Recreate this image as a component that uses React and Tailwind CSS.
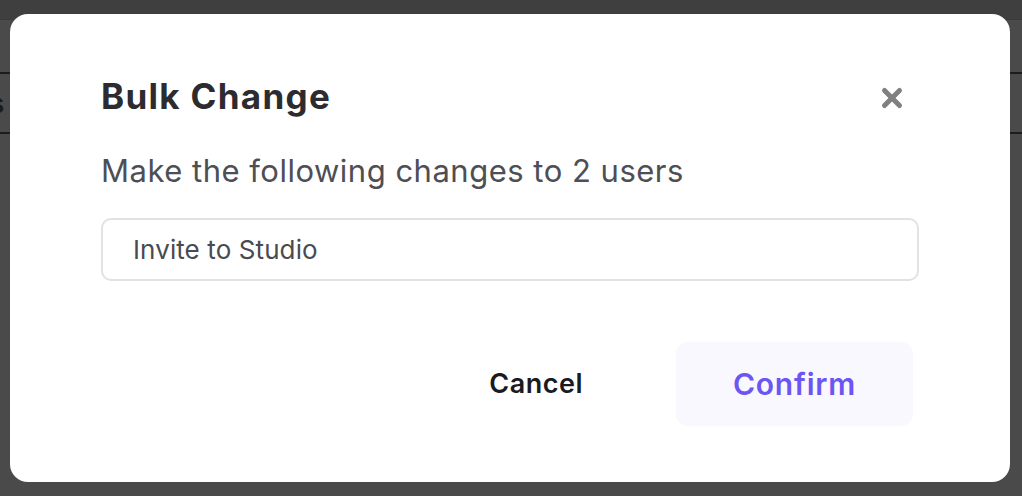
import { X } from 'lucide-react';

export default function App() {
    return (
        <div className="relative w-[1022px] h-[496px] overflow-hidden bg-[#4a4a4a] font-['Inter',sans-serif]">
            {/* page behind the overlay */}
            <div className="h-[20px] bg-[#3f3f3f] border-b border-[#3a3a3a]" />
            <div className="mt-[52px] h-[62px] border-y-2 border-[#1c1c1c] flex items-center">
                <span className="text-[26px] font-semibold text-[#1c1c1c] -ml-[10px]">s</span>
            </div>

            {/* modal */}
            <div className="absolute left-[10px] top-[14px] w-[1000px] h-[468px] rounded-[18px] bg-white pl-[91px] pr-[91px] pt-[61px]">
                <div className="flex items-center justify-between">
                    <h2 className="text-[35px] leading-[42px] font-bold text-[#2b2b30] tracking-[1.3px]">
                        Bulk Change
                    </h2>
                    <button className="mr-[12px] mt-[4px] text-[#808080]">
                        <X size={30} strokeWidth={4} />
                    </button>
                </div>
                <p className="mt-[35px] text-[31px] leading-[38px] text-[#4e4e55] tracking-[0.5px]">
                    Make the following changes to 2 users
                </p>
                <div className="mt-[28px] h-[63px] rounded-[10px] border-2 border-[#e2e2e6] flex items-center px-[30px]">
                    <span className="text-[26px] text-[#4a4a50] tracking-[0.1px]">Invite to Studio</span>
                </div>
                <div className="mt-[61px] flex items-center justify-end gap-[93px] pr-[6px]">
                    <button className="text-[27px] font-semibold text-[#1b1b1f] tracking-[0.5px]">Cancel</button>
                    <button className="w-[237px] h-[84px] rounded-[12px] bg-[#f9f8ff] text-[30px] font-semibold text-[#6c55f2] tracking-[0.8px]">
                        Confirm
                    </button>
                </div>
            </div>
        </div>
    );
}
